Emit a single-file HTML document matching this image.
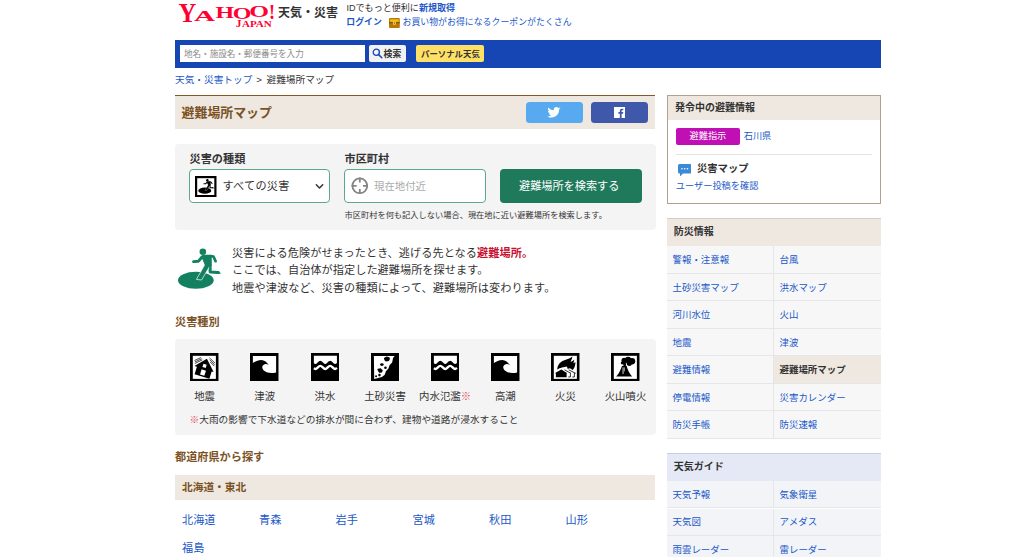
<!DOCTYPE html>
<html lang="ja">
<head>
<meta charset="utf-8">
<title>避難場所マップ - Yahoo!天気・災害</title>
<style>
html,body{margin:0;padding:0;background:#fff;}
body{width:1024px;height:557px;position:relative;overflow:hidden;font-family:"Liberation Sans","Noto Sans CJK JP",sans-serif;color:#333;}
.a{position:absolute;white-space:nowrap;line-height:1;text-align:justify;text-align-last:justify;}
.b{font-weight:bold;}
.lk{color:#1a58c8;}
.f89{font-size:8.9px;}
.f97{font-size:9.67px;}
.f104{font-size:10.4px;}
.f112{font-size:11.15px;}
.brown{color:#7a5224;}
.box{position:absolute;}
</style>
</head>
<body>

<!-- ===== header ===== -->
<svg class="box" id="logo" style="left:176px;top:0;" width="104" height="32" viewBox="0 0 104 32"><g fill="#ff0033" font-family="'Liberation Serif',serif" font-weight="bold"><text x="2.4" y="21.9" font-size="27" textLength="17.8" lengthAdjust="spacingAndGlyphs">Y</text><text x="18" y="20.6" font-size="14.5" textLength="21.2" lengthAdjust="spacingAndGlyphs">A</text><text x="39.4" y="17.5" font-size="17" textLength="18.6" lengthAdjust="spacingAndGlyphs">H</text><text x="56.8" y="19.4" font-size="17" textLength="18.7" lengthAdjust="spacingAndGlyphs">O</text><text x="73.2" y="17" font-size="17.5" textLength="19.8" lengthAdjust="spacingAndGlyphs">O</text><text x="93" y="18.9" font-size="22" textLength="6" lengthAdjust="spacingAndGlyphs">!</text><text x="59.8" y="26.9" font-size="11.4" textLength="5.7" lengthAdjust="spacingAndGlyphs">J</text><text x="66" y="26.9" font-size="8.6" textLength="29.75" lengthAdjust="spacingAndGlyphs">APAN</text></g></svg>
<div class="a b" style="left:278px;top:7px;font-size:12px;color:#333;width:60.0px;">天気・災害</div>
<div class="a" style="left:346.5px;top:4.3px;font-size:9.05px;width:108.6px;">IDでもっと便利に<span class="b lk">新規取得</span></div>
<div class="a f89 lk" style="left:346.3px;top:18.3px;width:35.6px;"><span class="b">ログイン</span></div>
<svg class="box" style="left:389px;top:17.500px;" width="10.800" height="10" viewBox="0 0 22 20"><rect x="0" y="0" width="22" height="20" rx="2" fill="#b87708"/><rect x="2" y="2.500" width="18" height="5" fill="#f2c01e"/><rect x="0" y="8.500" width="22" height="2" fill="#7a4a04"/><rect x="8" y="7" width="6" height="6.500" rx="1" fill="#f7d33c"/><rect x="10" y="9" width="2" height="2.500" fill="#7a4a04"/></svg>
<div class="a f89 lk" style="left:402.5px;top:18.3px;width:169.1px;">お買い物がお得になるクーポンがたくさん</div>

<!-- blue bar -->
<div class="box" style="left:174.800px;top:39.900px;width:706px;height:28.300px;background:#1646b4;"></div>
<div class="box" style="left:180px;top:45px;width:185px;height:17px;background:#fff;"></div>
<div class="a" style="left:184px;top:49.5px;font-size:8.55px;color:#8a8a8a;width:119.7px;">地名・施設名・郵便番号を入力</div>
<div class="box" style="left:369px;top:45px;width:37px;height:17px;background:#f2f2f2;border-radius:2px;"></div>
<svg class="box" style="left:372px;top:48px;" width="11" height="11" viewBox="0 0 11 11"><circle cx="4.3" cy="4.3" r="3.1" fill="none" stroke="#1646b4" stroke-width="1.3"/><path d="M6.6 6.6L9.8 9.8" stroke="#1646b4" stroke-width="1.5" stroke-linecap="round"/></svg>
<div class="a b" style="left:383.5px;top:49.5px;font-size:8.9px;color:#333;width:17.8px;">検索</div>
<div class="box" style="left:416px;top:45px;width:68px;height:17px;background:#ffe066;border-radius:2px;"></div>
<div class="a b" style="left:421px;top:49.5px;font-size:8.4px;color:#333;width:58.8px;">パーソナル天気</div>

<!-- breadcrumb -->
<div class="a f97" style="left:175px;top:75px;width:159.2px;"><span class="lk">天気・災害トップ</span><span style="margin:0 4.500px 0 4px;">&gt;</span>避難場所マップ</div>

<!-- ===== main column ===== -->
<div class="box" style="left:174.800px;top:95px;width:480.400px;height:33.800px;background:#efe8e1;"></div><div class="box" style="left:174.800px;top:94.600px;width:480.400px;height:1.600px;background:#85582a;"></div>
<div class="a b brown" style="left:181.600px;top:106.600px;font-size:12.900px;width:90.3px;">避難場所マップ</div>
<div class="box" style="left:525.5px;top:102px;width:57px;height:21.400px;background:#58aaf0;border-radius:3.500px;"></div>
<svg class="box" style="left:547px;top:107px;" width="14" height="11" viewBox="0 0 24 20"><path fill="#fff" d="M23.6 2.4c-.9.4-1.8.6-2.8.8 1-.6 1.800-1.600 2.100-2.700-.9.600-2 1-3.100 1.200C18.900.7 17.700.1 16.300.1c-2.700 0-4.800 2.200-4.800 4.800 0 .4 0 .800.100 1.100C7.600 5.800 4 3.900 1.700.9 1.200 1.600 1 2.500 1 3.400c0 1.700.900 3.200 2.200 4-.800 0-1.600-.2-2.200-.6v.1c0 2.300 1.700 4.300 3.900 4.700-.4.100-.800.200-1.300.2-.3 0-.6 0-.9-.1.600 1.900 2.400 3.300 4.500 3.400-1.700 1.300-3.700 2.100-6 2.100-.4 0-.8 0-1.200-.1 2.100 1.400 4.700 2.200 7.400 2.200 8.900 0 13.700-7.300 13.700-13.700v-.6c.9-.7 1.700-1.500 2.400-2.500z"/></svg>
<div class="box" style="left:591px;top:102px;width:57px;height:21.400px;background:#4058a9;border-radius:3.500px;"></div>
<svg class="box" style="left:614px;top:107px;" width="11" height="11" viewBox="0 0 22 22"><rect width="22" height="22" fill="#fff"/><path fill="#4058a9" d="M15.200 22v-8.500h2.900l.4-3.300h-3.300V8.100c0-1 .300-1.600 1.600-1.600h1.800V3.500c-.3 0-1.400-.1-2.600-.1-2.600 0-4.300 1.600-4.300 4.400v2.400H8.800v3.300h2.900V22z"/></svg>

<!-- search form -->
<div class="box" style="left:175px;top:144px;width:480.5px;height:86px;background:#f4f4f4;border-radius:4px;"></div>
<div class="a b f112" style="left:189.500px;top:153.500px;color:#333;width:55.8px;">災害の種類</div>
<div class="a b f112" style="left:344.500px;top:153.500px;color:#333;width:44.6px;">市区町村</div>
<div class="box" style="left:189px;top:169px;width:141px;height:34px;background:#fff;border:1px solid #5da88d;border-radius:4px;box-sizing:border-box;"></div>
<svg class="box" style="left:195.200px;top:176px;color:#000;" width="21.500" height="21.200" viewBox="0 0 21.500 21.200"><rect x="1.100" y="1.100" width="19.300" height="19" fill="#fff" stroke="#000" stroke-width="2.200"/><use href="#i-run" x="1.100" y="0.700" width="21.900" height="19.700"/></svg>
<div class="a f112" style="left:222.500px;top:181px;color:#333;width:66.9px;">すべての災害</div>
<svg class="box" style="left:315px;top:183px;" width="9" height="7" viewBox="0 0 9 7"><path d="M1.300 1.800L4.500 5 7.700 1.800" stroke="#333" stroke-width="1.500" fill="none" stroke-linecap="round" stroke-linejoin="round"/></svg>
<div class="box" style="left:344px;top:169px;width:142px;height:34px;background:#fff;border:1px solid #5da88d;border-radius:4px;box-sizing:border-box;"></div>
<svg class="box" style="left:350.500px;top:177.200px;" width="17.600" height="17.600" viewBox="0 0 17.600 17.600"><circle cx="8.800" cy="8.800" r="7.400" fill="none" stroke="#858585" stroke-width="1.800"/><path d="M8.800 0.600v5M8.800 12v5M0.600 8.800h5M12 8.800h5" stroke="#858585" stroke-width="1.800"/></svg>
<div class="a" style="left:374px;top:181.500px;font-size:10.4px;color:#aaa;width:52.0px;">現在地付近</div>
<div class="box" style="left:500px;top:169px;width:141.500px;height:34px;background:#1f7a5c;border-radius:4px;"></div>
<div class="a f112" style="left:519px;top:180.500px;color:#fff;width:100.4px;">避難場所を検索する</div>
<div class="a" style="left:344.500px;top:212px;font-size:8.200px;color:#333;width:262.4px;">市区町村を何も記入しない場合、現在地に近い避難場所を検索します。</div>

<!-- description -->
<svg class="box" id="runner" style="left:172px;top:242px;color:#13805f;" width="60" height="54"><use href="#i-run"/></svg>
<div class="a f112" style="left:232px;top:247.500px;color:#333;width:301.1px;">災害による危険がせまったとき、逃げる先となる<span class="b" style="color:#c8102e;">避難場所。</span></div>
<div class="a f112" style="left:232px;top:265.300px;color:#333;width:256.4px;">ここでは、自治体が指定した避難場所を探せます。</div>
<div class="a f112" style="left:232px;top:283px;color:#333;width:323.4px;">地震や津波など、災害の種類によって、避難場所は変わります。</div>

<div class="a b f112 brown" style="left:175px;top:316.500px;width:44.6px;">災害種別</div>

<!-- icon box -->
<div class="box" style="left:175px;top:339px;width:480.500px;height:96px;background:#f4f4f4;border-radius:4px;"></div>
<svg width="0" height="0" style="position:absolute">
 <defs>
  <symbol id="i-quake" viewBox="0 0 100 100">
   <rect x="4.900" y="4.900" width="90.200" height="90.200" fill="#fff" stroke="#000" stroke-width="9.800"/>
   <g transform="translate(16,74) rotate(17.400) scale(1,-1)">
    <path d="M-9,27 L25,64 L61,27 L54,27 L54,0 L0,0 L0,27 Z" fill="#000"/>
    <rect x="18.500" y="32.500" width="12" height="11.500" fill="#fff"/>
    <rect x="18.300" y="5" width="15.800" height="18.500" fill="#fff"/>
   </g>
   <path d="M16,26 L38,16 M17,31 L41,20 M17,36.500 L43,24" stroke="#000" stroke-width="2.500"/>
   <path d="M68,17 L87,35 M68,23 L86,41 M70,31 L85,46" stroke="#000" stroke-width="2.500"/>
  </symbol>
  <symbol id="i-wave" viewBox="0 0 100 100">
   <rect x="0" y="0" width="100" height="100" fill="#000"/>
   <path d="M10,10.500 H91 V68 C80,70.500 68,70.500 58,67 C50,64 42.500,58 42.500,50 C42.500,45 47,39.500 54,38.500 C58,38 62,40 65.500,43 C60,32 50,24.500 39.400,24.500 C28,25 18,30 10,34.500 Z" fill="#fff"/>
  </symbol>
  <symbol id="i-flood" viewBox="0 0 100 100">
   <rect x="0" y="0" width="100" height="100" fill="#000"/>
   <path d="M10,10 H90.400 V34.500 C88,36.500 86,38 84,38 C77.800,38 73,27 66.800,27 C60.600,27 55.900,38 49.700,38 C43.500,38 38.700,27 32.500,27 C26.300,27 21.700,38 15.500,38 C13.500,38 11.500,37 10,36 Z" fill="#fff"/>
   <path d="M10,53.500 C11.500,54.500 13.500,55.500 15.500,55.500 C21.700,55.500 26.300,44.800 32.500,44.800 C38.700,44.800 43.500,55.500 49.700,55.500 C55.900,55.500 60.600,44.800 66.800,44.800 C73,44.800 77.800,55.500 84,55.500 C86,55.500 88,54 90.400,52" fill="none" stroke="#fff" stroke-width="8.500"/>
  </symbol>
  <symbol id="i-slide" viewBox="0 0 100 100">
   <rect x="0" y="0" width="100" height="100" fill="#000"/>
   <path d="M10,10.500 L82.300,10.500 L77,17.700 L73.700,32.700 L65,41.400 L60.800,54.300 L52,64 L47.800,75.900 L38,83.400 L11.200,91 Z" fill="#fff"/>
   <path d="M45,17 L54,12.500 L64,15 L66,21 L62,28 L52,30 L47,25 Z" fill="#000"/>
   <ellipse cx="38" cy="40.300" rx="6.200" ry="5" fill="#000"/>
   <circle cx="50.400" cy="51.700" r="4.500" fill="#000"/>
   <path d="M23,56 L34,54 L40,60 L38,67 L29,68.500 L25,63 Z" fill="#000" stroke="#000" stroke-width="1.500" stroke-linejoin="round"/>
   <circle cx="29.500" cy="77" r="4.500" fill="#000"/>
   <circle cx="17.700" cy="81.300" r="3.500" fill="#000"/>
  </symbol>
  <symbol id="i-fire" viewBox="0 0 100 100">
   <rect x="4.900" y="4.900" width="90.200" height="90.200" fill="#fff" stroke="#000" stroke-width="9.800"/>
   <path transform="translate(0,12.500) scale(1,1.090) translate(0,-12.500)" d="M22,54 C22,42 30,32 40,27 C52,22 66,20 74.500,12.500 C74,18 72,23 68,29 C73,28 78,25 81,21.500 C81,26 80,30 77.500,34 C80,33 83,31.500 85,29.500 C85.500,38 83,48 75.500,55.500 C72,52 68,50 63,49.500 C62,51 60,52 58,52.500 C58,49 57,46 54,44 C50,46 44,46 38,47.500 C32,49 26,51 22,54 Z" fill="#000"/>
   <path d="M13,71 L36,57.500 L57,71 L54.500,71 L54.500,84.500 L17,84.500 L17,71 Z" fill="#000"/>
   <path d="M47,58.500 L69,70.500 L67.500,70.500 L67.500,83.500 L60.500,83.500 M61.700,58.500 L85,70.500 L81.500,70.500 L81.500,83.500 L74.500,83.500" fill="none" stroke="#000" stroke-width="2.800"/>
  </symbol>
  <symbol id="i-volcano" viewBox="0 0 100 100">
   <rect x="4.900" y="4.900" width="90.200" height="90.200" fill="#fff" stroke="#000" stroke-width="9.800"/>
   <path d="M18,82 C28,72 34,58 38.300,45.500 L54.300,44.700 C58,58 64,72 73.400,82 Z" fill="#000"/>
   <path d="M42,50 L42,73" stroke="#fff" stroke-width="3" fill="none"/>
   <path d="M47,50 L47,64" stroke="#ddd" stroke-width="2.200" fill="none"/>
   <g fill="#000"><circle cx="45.700" cy="25.500" r="9"/><circle cx="59.600" cy="24.500" r="11"/><circle cx="73.400" cy="28.700" r="11"/><circle cx="63.800" cy="36" r="9"/><circle cx="39" cy="35" r="5"/><path d="M40,30 L52,30 L52,46 L44,46 Z"/></g>
  </symbol>
<symbol id="i-run" viewBox="0 0 619 557"><g fill="currentColor" stroke="none"><ellipse cx="246" cy="395" rx="184" ry="88"/><circle cx="318" cy="100" r="34"/><path d="M302,150 L322,132 L398,132 L410,165 L410,250 L345,250 L322,198 Z"/></g><g fill="none" stroke="currentColor" stroke-linecap="round" stroke-linejoin="round"><path d="M312,152 L274,198 L222,202" stroke-width="30"/><path d="M396,146 L428,150 L450,198" stroke-width="28"/><path d="M392,240 L394,310 L470,314" stroke-width="32"/></g><path d="M455,298 L485,298 L505,328 L455,330 Z" fill="currentColor"/><path d="M342,228 L392,246 L305,392 L252,386 Z" fill="currentColor" stroke="#fff" stroke-width="7" stroke-linejoin="miter"/><path d="M338,215 L400,215 L396,262 L340,250 Z" fill="currentColor"/></symbol>
 </defs>
</svg>
<svg class="box" style="left:190.25px;top:352.750px;" width="28.700" height="28.700"><use href="#i-quake"/></svg>
<div class="a f104" style="left:194.2px;top:391.500px;color:#333;width:20.8px;">地震</div>
<svg class="box" style="left:250.38px;top:352.750px;" width="28.700" height="28.700"><use href="#i-wave"/></svg>
<div class="a f104" style="left:254.3px;top:391.500px;color:#333;width:20.8px;">津波</div>
<svg class="box" style="left:310.51px;top:352.750px;" width="28.700" height="28.700"><use href="#i-flood"/></svg>
<div class="a f104" style="left:314.5px;top:391.500px;color:#333;width:20.8px;">洪水</div>
<svg class="box" style="left:370.64px;top:352.750px;" width="28.700" height="28.700"><use href="#i-slide"/></svg>
<div class="a f104" style="left:364.2px;top:391.500px;color:#333;width:41.6px;">土砂災害</div>
<svg class="box" style="left:430.77px;top:352.750px;" width="28.700" height="28.700"><use href="#i-flood"/></svg>
<div class="a f104" style="left:419.1px;top:391.500px;color:#333;width:52.0px;">内水氾濫<span style="color:#e0485a;">※</span></div>
<svg class="box" style="left:490.90px;top:352.750px;" width="28.700" height="28.700"><use href="#i-wave"/></svg>
<div class="a f104" style="left:494.9px;top:391.500px;color:#333;width:20.8px;">高潮</div>
<svg class="box" style="left:551.03px;top:352.750px;" width="28.700" height="28.700"><use href="#i-fire"/></svg>
<div class="a f104" style="left:555.0px;top:391.500px;color:#333;width:20.8px;">火災</div>
<svg class="box" style="left:611.16px;top:352.750px;" width="28.700" height="28.700"><use href="#i-volcano"/></svg>
<div class="a f104" style="left:604.7px;top:391.500px;color:#333;width:41.6px;">火山噴火</div>
<div class="a f97" style="left:189.500px;top:415px;color:#333;width:328.8px;"><span style="color:#e0485a;">※</span>大雨の影響で下水道などの排水が間に合わず、建物や道路が浸水すること</div>

<div class="a b f112 brown" style="left:175px;top:452px;width:89.2px;">都道府県から探す</div>
<div class="box" style="left:175px;top:475px;width:480px;height:25px;background:#efe8e1;"></div>
<div class="a b brown" style="left:182px;top:481.800px;font-size:10.700px;width:64.2px;">北海道・東北</div>
<div class="a f112 lk" style="left:182px;top:514.700px;width:33.5px;">北海道</div>
<div class="a f112 lk" style="left:259px;top:514.700px;width:22.3px;">青森</div>
<div class="a f112 lk" style="left:335.500px;top:514.700px;width:22.3px;">岩手</div>
<div class="a f112 lk" style="left:412.500px;top:514.700px;width:22.3px;">宮城</div>
<div class="a f112 lk" style="left:489px;top:514.700px;width:22.3px;">秋田</div>
<div class="a f112 lk" style="left:565.500px;top:514.700px;width:22.3px;">山形</div>
<div class="a f112 lk" style="left:182px;top:543.200px;width:22.3px;">福島</div>

<!-- ===== sidebar ===== -->
<div class="box" style="left:667px;top:95px;width:214px;height:108.500px;border:1px solid #b5a08c;box-sizing:border-box;background:#fff;"></div>
<div class="box" style="left:668px;top:96px;width:212px;height:23.500px;background:#efe8e1;"></div>
<div class="a b" style="left:675px;top:102.800px;font-size:10px;color:#333;width:80.0px;">発令中の避難情報</div>
<div class="box" style="left:675.700px;top:127.600px;width:64.300px;height:17.900px;background:#c010b4;border-radius:2px;"></div>
<div class="a" style="left:689.500px;top:132px;font-size:9.200px;color:#fff;width:36.8px;">避難指示</div>
<div class="a lk" style="left:743.700px;top:132px;font-size:9.200px;width:27.6px;">石川県</div>
<div class="box" style="left:675.700px;top:154px;width:196.500px;height:1px;background:#e4e4e4;"></div>
<svg class="box" style="left:677.500px;top:163.500px;" width="13.500" height="12.500" viewBox="0 0 27 25"><path d="M3,0 H24 A3,3 0 0 1 27,3 V16 A3,3 0 0 1 24,19 H10 L4,25 V19 H3 A3,3 0 0 1 0,16 V3 A3,3 0 0 1 3,0 Z" fill="#3a8ad8"/><circle cx="8" cy="9.500" r="1.600" fill="#fff"/><circle cx="13.500" cy="9.500" r="1.600" fill="#fff"/><circle cx="19" cy="9.500" r="1.600" fill="#fff"/></svg>
<div class="a b" style="left:697px;top:164px;font-size:10.300px;color:#333;width:51.5px;">災害マップ</div>
<div class="a lk" style="left:675.700px;top:182px;font-size:9.200px;width:82.8px;">ユーザー投稿を確認</div>
<div class="box" style="left:667px;top:218px;width:214px;height:28.4px;background:#efe8e1;border-top:1px solid #d9cdbf;box-sizing:border-box;"></div>
<div class="a b" style="left:673.700px;top:227px;font-size:10px;color:#333;width:40.0px;">防災情報</div>
<div class="box" style="left:667px;top:246.40px;width:214px;height:27.47px;background:#f7f7f7;border-bottom:1px solid #e6e6e6;box-sizing:border-box;"></div>
<div class="box" style="left:773px;top:246.40px;width:1px;height:27.47px;background:#e6e6e6;"></div>
<div class="a lk" style="left:672.500px;top:255.30px;font-size:9.45px;width:56.7px;">警報・注意報</div>
<div class="a lk" style="left:779.500px;top:255.30px;font-size:9.45px;width:18.9px;">台風</div>
<div class="box" style="left:667px;top:273.87px;width:214px;height:27.47px;background:#f7f7f7;border-bottom:1px solid #e6e6e6;box-sizing:border-box;"></div>
<div class="box" style="left:773px;top:273.87px;width:1px;height:27.47px;background:#e6e6e6;"></div>
<div class="a lk" style="left:672.500px;top:282.77px;font-size:9.45px;width:66.1px;">土砂災害マップ</div>
<div class="a lk" style="left:779.500px;top:282.77px;font-size:9.45px;width:47.2px;">洪水マップ</div>
<div class="box" style="left:667px;top:301.34px;width:214px;height:27.47px;background:#f7f7f7;border-bottom:1px solid #e6e6e6;box-sizing:border-box;"></div>
<div class="box" style="left:773px;top:301.34px;width:1px;height:27.47px;background:#e6e6e6;"></div>
<div class="a lk" style="left:672.500px;top:310.24px;font-size:9.45px;width:37.8px;">河川水位</div>
<div class="a lk" style="left:779.500px;top:310.24px;font-size:9.45px;width:18.9px;">火山</div>
<div class="box" style="left:667px;top:328.81px;width:214px;height:27.47px;background:#f7f7f7;border-bottom:1px solid #e6e6e6;box-sizing:border-box;"></div>
<div class="box" style="left:773px;top:328.81px;width:1px;height:27.47px;background:#e6e6e6;"></div>
<div class="a lk" style="left:672.500px;top:337.71px;font-size:9.45px;width:18.9px;">地震</div>
<div class="a lk" style="left:779.500px;top:337.71px;font-size:9.45px;width:18.9px;">津波</div>
<div class="box" style="left:667px;top:356.28px;width:214px;height:27.47px;background:#f7f7f7;border-bottom:1px solid #e6e6e6;box-sizing:border-box;"></div>
<div class="box" style="left:773.700px;top:356.28px;width:107.300px;height:26.47px;background:#efe8e1;"></div>
<div class="box" style="left:773px;top:356.28px;width:1px;height:27.47px;background:#e6e6e6;"></div>
<div class="a lk" style="left:672.500px;top:365.18px;font-size:9.45px;width:37.8px;">避難情報</div>
<div class="a b" style="left:779.500px;top:365.18px;font-size:9.45px;color:#333;width:66.1px;">避難場所マップ</div>
<div class="box" style="left:667px;top:383.75px;width:214px;height:27.47px;background:#f7f7f7;border-bottom:1px solid #e6e6e6;box-sizing:border-box;"></div>
<div class="box" style="left:773px;top:383.75px;width:1px;height:27.47px;background:#e6e6e6;"></div>
<div class="a lk" style="left:672.500px;top:392.65px;font-size:9.45px;width:37.8px;">停電情報</div>
<div class="a lk" style="left:779.500px;top:392.65px;font-size:9.45px;width:66.1px;">災害カレンダー</div>
<div class="box" style="left:667px;top:411.22px;width:214px;height:27.47px;background:#f7f7f7;border-bottom:1px solid #e6e6e6;box-sizing:border-box;"></div>
<div class="box" style="left:773px;top:411.22px;width:1px;height:27.47px;background:#e6e6e6;"></div>
<div class="a lk" style="left:672.500px;top:420.12px;font-size:9.45px;width:37.8px;">防災手帳</div>
<div class="a lk" style="left:779.500px;top:420.12px;font-size:9.45px;width:37.8px;">防災速報</div>
<div class="box" style="left:667px;top:452.8px;width:214px;height:28.5px;background:#e4e9f5;border-top:1px solid #c5d0e8;box-sizing:border-box;"></div>
<div class="a b" style="left:673.700px;top:461.8px;font-size:10px;color:#333;width:50.0px;">天気ガイド</div>
<div class="box" style="left:667px;top:481.30px;width:214px;height:27.2px;background:#f3f4f8;border-bottom:1px solid #e6e6e6;box-sizing:border-box;"></div>
<div class="box" style="left:773px;top:481.30px;width:1px;height:27.2px;background:#e6e6e6;"></div>
<div class="a lk" style="left:672.500px;top:490.20px;font-size:9.45px;width:37.8px;">天気予報</div>
<div class="a lk" style="left:779.500px;top:490.20px;font-size:9.45px;width:37.8px;">気象衛星</div>
<div class="box" style="left:667px;top:508.50px;width:214px;height:27.2px;background:#f3f4f8;border-bottom:1px solid #e6e6e6;box-sizing:border-box;"></div>
<div class="box" style="left:773px;top:508.50px;width:1px;height:27.2px;background:#e6e6e6;"></div>
<div class="a lk" style="left:672.500px;top:517.40px;font-size:9.45px;width:28.3px;">天気図</div>
<div class="a lk" style="left:779.500px;top:517.40px;font-size:9.45px;width:37.8px;">アメダス</div>
<div class="box" style="left:667px;top:535.70px;width:214px;height:27.2px;background:#f3f4f8;border-bottom:1px solid #e6e6e6;box-sizing:border-box;"></div>
<div class="box" style="left:773px;top:535.70px;width:1px;height:27.2px;background:#e6e6e6;"></div>
<div class="a lk" style="left:672.500px;top:544.60px;font-size:9.45px;width:56.7px;">雨雲レーダー</div>
<div class="a lk" style="left:779.500px;top:544.60px;font-size:9.45px;width:47.2px;">雷レーダー</div>

</body>
</html>
